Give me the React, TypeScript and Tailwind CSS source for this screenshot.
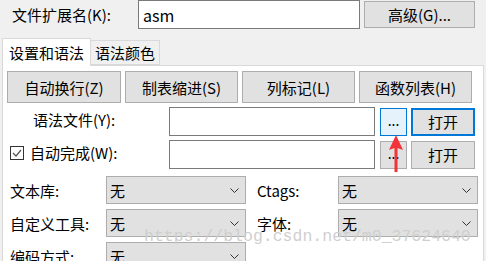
const font = "font-['Noto_Sans_CJK_SC','Noto_Sans',sans-serif]";

function Btn({ label, w, h = "h-[28px]" }: { label: string; w: string; h?: string }) {
  return (
    <div
      className={`${w} ${h} shrink-0 flex items-center justify-center bg-[#e1e1e1] border border-[#adadad] text-[15px] text-black`}
    >
      {label}
    </div>
  );
}

function Select({ value }: { value: string }) {
  return (
    <div className="w-[140px] h-[28px] shrink-0 flex items-center justify-between bg-[#e1e1e1] border border-[#adadad] pl-[3px] pr-[6px]">
      <span className="text-[15px] text-black">{value}</span>
      <svg width="9" height="5" viewBox="0 0 9 5">
        <polyline points="0.5,0.5 4.5,4.5 8.5,0.5" fill="none" stroke="#333" strokeWidth="1" />
      </svg>
    </div>
  );
}

export default function App() {
  return (
    <div className={`relative w-[486px] h-[261px] overflow-hidden bg-[#f0f0f0] ${font} leading-none`}>
      {/* top row */}
      <div className="flex items-start h-[38px]">
        <div className="w-[138px] h-[29px] pl-[12px] flex items-center text-[15px] text-black">文件扩展名(K):</div>
        <div className="w-[222px] h-[29px] border border-[#7a7a7a] bg-white flex items-center pl-[4px] text-[16px] text-black">
          asm
        </div>
        <div className="ml-[4px] mt-[1px]">
          <Btn label="高级(G)..." w="w-[111px]" h="h-[27px]" />
        </div>
      </div>

      {/* tabs */}
      <div className="flex items-start ml-[2px] h-[27px]">
        <div className="relative z-10 h-[28px] w-[89px] bg-white border border-b-0 border-[#d9d9d9] flex items-center justify-center text-[15px] text-black">
          设置和语法
        </div>
        <div className="mt-[2px] h-[25px] w-[69px] border border-l-0 border-[#d9d9d9] flex items-center justify-center text-[15px] text-black">
          语法颜色
        </div>
      </div>

      {/* panel */}
      <div className="ml-[2px] w-[482px] h-[200px] border border-[#d9d9d9] bg-white pt-[5px] pl-[4px]">
        <div className="flex gap-[4px]">
          <Btn label="自动换行(Z)" w="w-[114px]" h="h-[32px]" />
          <Btn label="制表缩进(S)" w="w-[113px]" h="h-[32px]" />
          <Btn label="列标记(L)" w="w-[113px]" h="h-[32px]" />
          <Btn label="函数列表(H)" w="w-[113px]" h="h-[32px]" />
        </div>

        <div className="flex items-center mt-[4px] h-[29px]">
          <div className="w-[162px] pl-[26px] text-[15px] text-black pb-[4px]">语法文件(Y):</div>
          <div className="w-[206px] h-[29px] border border-[#7a7a7a] bg-white" />
          <div className="ml-[5px] w-[27px] h-[28px] flex items-center justify-center bg-[#e5f1fb] border border-[#0078d7] text-[14px] text-black pb-[4px]">
            ...
          </div>
          <div className="ml-[4px] w-[64px] h-[28px] flex items-center justify-center bg-[#e1e1e1] border-2 border-[#0078d7] text-[15px] text-black">
            打开
          </div>
        </div>

        <div className="flex items-center mt-[4px] h-[29px]">
          <div className="w-[162px] pl-[3px] flex items-center gap-[6px] pb-[4px]">
            <div className="w-[14px] h-[14px] border border-[#333] bg-white flex items-center justify-center">
              <svg width="10" height="8" viewBox="0 0 10 8">
                <polyline points="1,4 4,7 9,1" fill="none" stroke="#555" strokeWidth="1.2" />
              </svg>
            </div>
            <span className="text-[15px] text-black">自动完成(W):</span>
          </div>
          <div className="w-[206px] h-[29px] border border-[#7a7a7a] bg-white" />
          <div className="ml-[5px] w-[27px] h-[28px] flex items-center justify-center bg-[#e1e1e1] border border-[#adadad] text-[14px] text-black pb-[4px]">
            ...
          </div>
          <div className="ml-[4px] w-[64px] h-[28px] flex items-center justify-center bg-[#e1e1e1] border border-[#adadad] text-[15px] text-black">
            打开
          </div>
        </div>

        <div className="flex flex-col gap-[5px] mt-[7px] pl-[3px]">
          <div className="flex items-center h-[28px]">
            <div className="w-[96px] text-[15px] text-black">文本库:</div>
            <Select value="无" />
            <div className="w-[92px] pl-[11px] text-[15px] text-black">Ctags:</div>
            <Select value="无" />
          </div>
          <div className="flex items-center h-[28px]">
            <div className="w-[96px] text-[15px] text-black">自定义工具:</div>
            <Select value="无" />
            <div className="w-[92px] pl-[11px] text-[15px] text-black">字体:</div>
            <Select value="无" />
          </div>
          <div className="flex items-center h-[28px]">
            <div className="w-[96px] text-[15px] text-black">编码方式:</div>
            <Select value="无" />
          </div>
        </div>
      </div>

      {/* watermark */}
      <div className="absolute left-[144px] top-[229px] font-['Liberation_Mono',monospace] text-[16.5px] text-[#cfcfcf] whitespace-nowrap">
        https://blog.csdn.net/m0_37624640
      </div>

      {/* red annotation arrow */}
      <svg className="absolute left-[388px] top-[134px]" width="16" height="40" viewBox="0 0 16 40">
        <polygon points="8,1 1,16 6.5,14 6.5,38 9.5,38 9.5,14 15,16" fill="#f2333a" />
      </svg>
    </div>
  );
}
